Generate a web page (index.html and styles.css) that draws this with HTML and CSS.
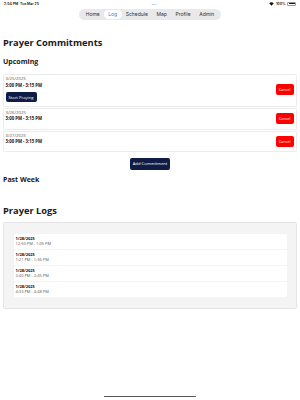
FILE: index.html
```html
<!DOCTYPE html>
<html lang="en">

<head>
    <meta charset="UTF-8">
    <meta name="viewport" content="width=device-width, initial-scale=1.0">
    <title>Prayer Log</title>
    <link rel="stylesheet" href="styles.css">
</head>

<body>
    <div class="status">
        <span class="status-left">2:54 PM&nbsp;&nbsp;Tue Mar 25</span>
        <span class="status-dots">•••</span>
        <span class="status-right">
            <svg width="5" height="4" viewBox="0 0 10 8">
                <path d="M5 7.5 L0.5 2.5 A6.5 6.5 0 0 1 9.5 2.5 Z" fill="#111" />
            </svg>
            100%
            <span class="battery"><span class="battery-fill"></span></span>
        </span>
    </div>

    <div class="nav-wrap">
        <ul class="nav">
            <li>Home</li>
            <li class="active">Log</li>
            <li>Schedule</li>
            <li>Map</li>
            <li>Profile</li>
            <li>Admin</li>
        </ul>
    </div>

    <div class="page">
        <h1>Prayer Commitments</h1>
        <h2>Upcoming</h2>

        <div class="commitments">
            <div class="card first">
                <div class="card-info">
                    <div class="date">3/25/2025</div>
                    <div class="time">3:00 PM - 3:15 PM</div>
                    <button class="btn-dark start">Start Praying</button>
                </div>
                <button class="btn-cancel">Cancel</button>
            </div>
            <div class="card">
                <div class="card-info">
                    <div class="date">3/26/2025</div>
                    <div class="time">3:00 PM - 3:15 PM</div>
                </div>
                <button class="btn-cancel">Cancel</button>
            </div>
            <div class="card">
                <div class="card-info">
                    <div class="date">3/27/2025</div>
                    <div class="time">3:00 PM - 3:15 PM</div>
                </div>
                <button class="btn-cancel">Cancel</button>
            </div>
        </div>

        <div class="add-row">
            <button class="btn-dark add">Add Commitment</button>
        </div>

        <h2 class="past">Past Week</h2>

        <h1 class="logs-title">Prayer Logs</h1>

        <div class="logs">
            <div class="log">
                <div class="log-date">1/28/2025</div>
                <div class="log-time">12:50 PM - 1:05 PM</div>
            </div>
            <div class="log">
                <div class="log-date">1/28/2025</div>
                <div class="log-time">1:21 PM - 1:36 PM</div>
            </div>
            <div class="log">
                <div class="log-date">1/28/2025</div>
                <div class="log-time">2:40 PM - 2:45 PM</div>
            </div>
            <div class="log">
                <div class="log-date">1/28/2025</div>
                <div class="log-time">4:33 PM - 4:48 PM</div>
            </div>
        </div>
    </div>

    <div class="home-bar"></div>
</body>

</html>
```

FILE: styles.css
```css
* {
    margin: 0;
    padding: 0;
    box-sizing: border-box;
}

body {
    width: 300px;
    height: 400px;
    position: relative;
    font-family: "Open Sans", sans-serif;
    font-size: 5px;
    color: #111;
    background: #fff;
    overflow: hidden;
}

/* status bar */
.status {
    height: 7px;
    padding: 0 4px;
    display: flex;
    align-items: center;
    justify-content: space-between;
    font-family: "Inter", sans-serif;
    font-size: 3.5px;
    font-weight: 600;
}

.status-dots {
    color: #999;
    font-size: 3px;
    letter-spacing: 0.3px;
}

.status-right {
    display: flex;
    align-items: center;
    gap: 1.5px;
}

.battery {
    width: 9px;
    height: 4px;
    border: 0.5px solid #999;
    border-radius: 1px;
    padding: 0.5px;
    display: flex;
}

.battery-fill {
    flex: 1;
    background: #111;
    border-radius: 0.5px;
}

/* nav */
.nav-wrap {
    display: flex;
    justify-content: center;
    margin-top: 2px;
}

.nav {
    display: flex;
    align-items: center;
    height: 11px;
    padding: 0 2px;
    background: #e9e9eb;
    border-radius: 6px;
    list-style: none;
    font-family: "Inter", sans-serif;
    font-size: 5px;
    color: #333;
}

.nav li {
    padding: 0 4.3px;
    line-height: 8.5px;
    border-radius: 5px;
}

.nav li.active {
    background: #fff;
    color: #2a7de1;
}

/* page */
.page {
    padding: 0 3px 0 3px;
}

h1 {
    font-size: 9.3px;
    font-weight: 700;
    margin-top: 17px;
    line-height: 12px;
    color: #1a1a1a;
}

h2 {
    font-size: 7px;
    font-weight: 700;
    margin-top: 7.5px;
    line-height: 9px;
    color: #1a1a1a;
}

.commitments {
    margin-top: 8px;
    display: flex;
    flex-direction: column;
    gap: 1px;
}

.card {
    display: flex;
    align-items: center;
    justify-content: space-between;
    border: 0.5px solid #ececec;
    border-radius: 1.5px;
    padding: 1.5px 2.5px 1.5px 1.5px;
    min-height: 22px;
}

.card:last-child {
    min-height: 21px;
}

.card-info {
    align-self: flex-start;
}

.date {
    font-size: 4.3px;
    color: #555;
    line-height: 5.5px;
}

.time {
    font-size: 4.3px;
    font-weight: 700;
    line-height: 5.5px;
}

.first {
    padding-bottom: 3.5px;
}

.first .time {
    margin-top: 1.5px;
}

.btn-dark {
    display: block;
    background: #0f1c45;
    color: #fff;
    border: none;
    border-radius: 2px;
    font-family: "Open Sans", sans-serif;
    font-size: 4.2px;
}

.start {
    margin-top: 3.5px;
    width: 31px;
    height: 10px;
}

.btn-cancel {
    background: #ff0000;
    color: #fff;
    border: none;
    border-radius: 2px;
    font-family: "Open Sans", sans-serif;
    font-size: 3.8px;
    width: 18px;
    height: 11px;
}

.add-row {
    display: flex;
    justify-content: center;
    margin-top: 6px;
}

.add {
    width: 40px;
    height: 12px;
}

.past {
    margin-top: 5.5px;
}

.logs-title {
    margin-top: 20.5px;
}

.logs {
    margin-top: 5.7px;
    background: #f4f4f4;
    border: 0.5px solid #e4e4e4;
    border-radius: 1.5px;
    padding: 11px 9px 11px 9.5px;
    display: flex;
    flex-direction: column;
    gap: 1.5px;
}

.log {
    background: #fff;
    border-radius: 1px;
    height: 14.5px;
    padding: 1.8px 2px 0;
}

.log-date {
    font-size: 4px;
    font-weight: 700;
    line-height: 5px;
}

.log-time {
    font-size: 4px;
    color: #555;
    line-height: 5px;
}

.home-bar {
    position: absolute;
    left: 104px;
    top: 395.5px;
    width: 92px;
    height: 1.6px;
    border-radius: 1px;
    background: #555;
}
```
